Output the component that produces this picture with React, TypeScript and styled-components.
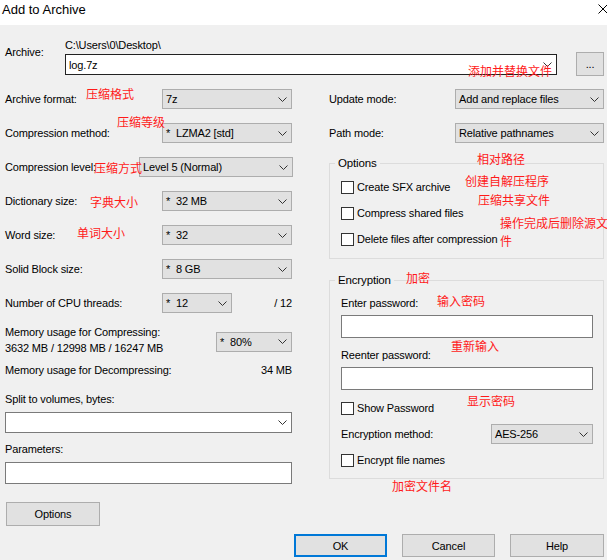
import React from 'react';
import styled, { createGlobalStyle } from 'styled-components';

const GlobalStyle = createGlobalStyle`
  html, body { margin: 0; padding: 0; background: #f0f0f0; }
  * { box-sizing: border-box; }
`;

const Window = styled.div`
  position: relative;
  width: 607px;
  height: 560px;
  overflow: hidden;
  background: #f0f0f0;
  font-family: "Liberation Sans", "Noto Sans CJK SC", sans-serif;
  font-size: 11px;
  letter-spacing: -0.15px;
  color: #000;
  display: flex;
  flex-direction: column;
`;

const TitleBar = styled.div`
  height: 25px;
  flex: none;
  background: #fff;
  display: flex;
  align-items: flex-start;
  justify-content: space-between;
  padding-left: 2px;
`;

const Title = styled.div`
  font-size: 13px;
  letter-spacing: 0;
  line-height: 16px;
  padding-top: 2px;
`;

const CloseIcon = styled.svg`
  margin-top: 4px;
  margin-right: -1px;
`;

const Body = styled.div`
  flex: 1;
  display: flex;
  flex-direction: column;
  padding: 0 3px 0 5px;
`;

const ArchiveSection = styled.div`
  display: flex;
  margin-top: 13px;
`;

const ArchiveLabel = styled.div`
  width: 60px;
  margin-top: 7px;
  line-height: 14px;
`;

const ArchiveMain = styled.div`
  width: 492px;
  display: flex;
  flex-direction: column;
`;

const PathText = styled.div`
  line-height: 14px;
  margin-bottom: 2px;
`;

const Combo = styled.div<{ $dark?: boolean; $h?: number; $mt?: number }>`
  height: ${p => p.$h ?? 21}px;
  margin-top: ${p => p.$mt ?? 0}px;
  background: #fff;
  border: 1px solid ${p => (p.$dark ? '#222' : '#7a7a7a')};
  display: flex;
  align-items: center;
  justify-content: space-between;
  padding: 0 4px 0 3px;
  font-size: 11px;
`;

const Button = styled.div<{ $w: number; $h?: number; $primary?: boolean }>`
  width: ${p => p.$w}px;
  height: ${p => p.$h ?? 23}px;
  flex: none;
  background: #e1e1e1;
  border: ${p => (p.$primary ? '2px solid #0078d7' : '1px solid #adadad')};
  display: flex;
  align-items: center;
  justify-content: center;
  font-size: 11px;
`;

const BrowseButton = styled(Button)`
  margin-left: 19px;
  margin-top: 14px;
`;

const Columns = styled.div`
  display: flex;
  margin-top: 6px;
`;

const LeftColumn = styled.div`
  width: 287px;
  display: flex;
  flex-direction: column;
`;

const RightColumn = styled.div`
  width: 275px;
  margin-left: 37px;
  display: flex;
  flex-direction: column;
`;

const FieldRow = styled.div<{ $h?: number }>`
  height: ${p => p.$h ?? 34}px;
  display: flex;
  align-items: center;
  justify-content: space-between;
`;

const Label = styled.div`
  line-height: 16px;
  white-space: nowrap;
`;

const Select = styled.div<{ $w: number; $mr?: number; $mt?: number }>`
  width: ${p => p.$w}px;
  height: 20px;
  flex: none;
  margin-right: ${p => p.$mr ?? 0}px;
  margin-top: ${p => p.$mt ?? 0}px;
  background: #e1e1e1;
  border: 1px solid #adadad;
  display: flex;
  align-items: center;
  justify-content: space-between;
  padding: 0 4px 0 3px;
  white-space: pre;
  font-size: 11px;
`;

const CpuControls = styled.div`
  width: 130px;
  display: flex;
  align-items: center;
  justify-content: space-between;
`;

const SmallLabel = styled.div<{ $mt: number }>`
  margin-top: ${p => p.$mt}px;
  line-height: 14px;
`;

const TextInput = styled.div<{ $h: number; $mt: number }>`
  height: ${p => p.$h}px;
  margin-top: ${p => p.$mt}px;
  background: #fff;
  border: 1px solid #7a7a7a;
`;

const OptionsButton = styled(Button)`
  margin-top: 18px;
  margin-left: 1px;
`;

const Group = styled.fieldset<{ $mt: number; $pt: number; $pb: number }>`
  margin: ${p => p.$mt}px 0 0 0;
  padding: ${p => p.$pt}px 10px ${p => p.$pb}px 11px;
  border: 1px solid #dcdcdc;
  min-width: 0;
  display: flex;
  flex-direction: column;
`;

const GroupLegend = styled.legend`
  padding: 0 3px;
  margin-left: -6px;
  line-height: 14px;
  font-size: 11.5px;
`;

const CheckRow = styled.div<{ $mt?: number }>`
  height: 26px;
  margin-top: ${p => p.$mt ?? 0}px;
  display: flex;
  align-items: center;
  gap: 3px;
  white-space: nowrap;
  font-size: 11px;
`;

const CheckBox = styled.span`
  width: 13px;
  height: 13px;
  flex: none;
  background: #fff;
  border: 1px solid #333;
`;

const Footer = styled.div`
  display: flex;
  justify-content: flex-end;
  gap: 15px;
  margin-top: 8px;
`;

const Note = styled.span<{ $x: number; $y: number }>`
  position: absolute;
  left: ${p => p.$x}px;
  top: ${p => p.$y}px;
  color: #ff1a1a;
  font-family: "Noto Sans CJK SC", sans-serif;
  font-size: 12px;
  line-height: 18px;
  letter-spacing: 0;
  white-space: nowrap;
`;

const ChevronSvg = styled.svg`
  flex: none;
`;

const Chevron = () => (
  <ChevronSvg width="9" height="5" viewBox="0 0 9 5">
    <polyline points="0.5,0.5 4.5,4.5 8.5,0.5" fill="none" stroke="#333" strokeWidth="1" />
  </ChevronSvg>
);

const Sel = ({ w, text, mr, mt }: { w: number; text: string; mr?: number; mt?: number }) => (
  <Select $w={w} $mr={mr} $mt={mt}>
    <span>{text}</span>
    <Chevron />
  </Select>
);

const notes: { x: number; y: number; t: React.ReactNode }[] = [
  { x: 468, y: 62, t: '添加并替换文件' },
  { x: 86, y: 85, t: '压缩格式' },
  { x: 117, y: 113, t: '压缩等级' },
  { x: 94, y: 159, t: '压缩方式' },
  { x: 90, y: 193, t: '字典大小' },
  { x: 77, y: 224, t: '单词大小' },
  { x: 477, y: 150, t: '相对路径' },
  { x: 465, y: 172, t: '创建自解压程序' },
  { x: 478, y: 191, t: '压缩共享文件' },
  { x: 500, y: 214, t: <>操作完成后删除源文<br />件</> },
  { x: 406, y: 269, t: '加密' },
  { x: 437, y: 292, t: '输入密码' },
  { x: 451, y: 337, t: '重新输入' },
  { x: 467, y: 392, t: '显示密码' },
  { x: 392, y: 477, t: '加密文件名' },
];

export default function App() {
  return (
    <Window>
      <GlobalStyle />
      <TitleBar>
        <Title>Add to Archive</Title>
        <CloseIcon width="10" height="10" viewBox="0 0 10 10">
          <path d="M0.5 0.5 L9.5 9.5 M9.5 0.5 L0.5 9.5" stroke="#000" strokeWidth="1" fill="none" />
        </CloseIcon>
      </TitleBar>
      <Body>
        <ArchiveSection>
          <ArchiveLabel>Archive:</ArchiveLabel>
          <ArchiveMain>
            <PathText>C:\Users\0\Desktop\</PathText>
            <Combo $dark>
              <span>log.7z</span>
              <Chevron />
            </Combo>
          </ArchiveMain>
          <BrowseButton $w={28} $h={24}>...</BrowseButton>
        </ArchiveSection>

        <Columns>
          <LeftColumn>
            <FieldRow>
              <Label>Archive format:</Label>
              <Sel w={130} text="7z" />
            </FieldRow>
            <FieldRow>
              <Label>Compression method:</Label>
              <Sel w={130} text="*  LZMA2 [std]" />
            </FieldRow>
            <FieldRow>
              <Label>Compression level:</Label>
              <Sel w={154} mr={-1} text="Level 5 (Normal)" />
            </FieldRow>
            <FieldRow>
              <Label>Dictionary size:</Label>
              <Sel w={130} text="*  32 MB" />
            </FieldRow>
            <FieldRow>
              <Label>Word size:</Label>
              <Sel w={130} text="*  32" />
            </FieldRow>
            <FieldRow>
              <Label>Solid Block size:</Label>
              <Sel w={130} text="*  8 GB" />
            </FieldRow>
            <FieldRow>
              <Label>Number of CPU threads:</Label>
              <CpuControls>
                <Sel w={70} text="*  12" />
                <Label>/ 12</Label>
              </CpuControls>
            </FieldRow>
            <FieldRow $h={40}>
              <Label>
                Memory usage for Compressing:
                <br />
                3632 MB / 12998 MB / 16247 MB
              </Label>
              <Sel w={76} mt={3} text="*  80%" />
            </FieldRow>
            <FieldRow $h={20}>
              <Label>Memory usage for Decompressing:</Label>
              <Label>34 MB</Label>
            </FieldRow>
            <SmallLabel $mt={12}>Split to volumes, bytes:</SmallLabel>
            <Combo $mt={6}>
              <span />
              <Chevron />
            </Combo>
            <SmallLabel $mt={9}>Parameters:</SmallLabel>
            <TextInput $h={22} $mt={6} />
            <OptionsButton $w={94} $h={24}>Options</OptionsButton>
          </LeftColumn>

          <RightColumn>
            <FieldRow>
              <Label>Update mode:</Label>
              <Sel w={149} text="Add and replace files" />
            </FieldRow>
            <FieldRow>
              <Label>Path mode:</Label>
              <Sel w={149} text="Relative pathnames" />
            </FieldRow>
            <Group $mt={6} $pt={4} $pb={6}>
              <GroupLegend>Options</GroupLegend>
              <CheckRow>
                <CheckBox />
                Create SFX archive
              </CheckRow>
              <CheckRow>
                <CheckBox />
                Compress shared files
              </CheckRow>
              <CheckRow>
                <CheckBox />
                Delete files after compression
              </CheckRow>
            </Group>
            <Group $mt={14} $pt={9} $pb={5}>
              <GroupLegend>Encryption</GroupLegend>
              <SmallLabel $mt={0}>Enter password:</SmallLabel>
              <TextInput $h={23} $mt={5} />
              <SmallLabel $mt={10}>Reenter password:</SmallLabel>
              <TextInput $h={23} $mt={5} />
              <CheckRow $mt={5}>
                <CheckBox />
                Show Password
              </CheckRow>
              <FieldRow $h={26}>
                <Label>Encryption method:</Label>
                <Sel w={102} text="AES-256" />
              </FieldRow>
              <CheckRow>
                <CheckBox />
                Encrypt file names
              </CheckRow>
            </Group>
          </RightColumn>
        </Columns>

        <Footer>
          <Button $w={93} $primary>OK</Button>
          <Button $w={93}>Cancel</Button>
          <Button $w={94}>Help</Button>
        </Footer>
      </Body>
      {notes.map((n, i) => (
        <Note key={i} $x={n.x} $y={n.y}>{n.t}</Note>
      ))}
    </Window>
  );
}
